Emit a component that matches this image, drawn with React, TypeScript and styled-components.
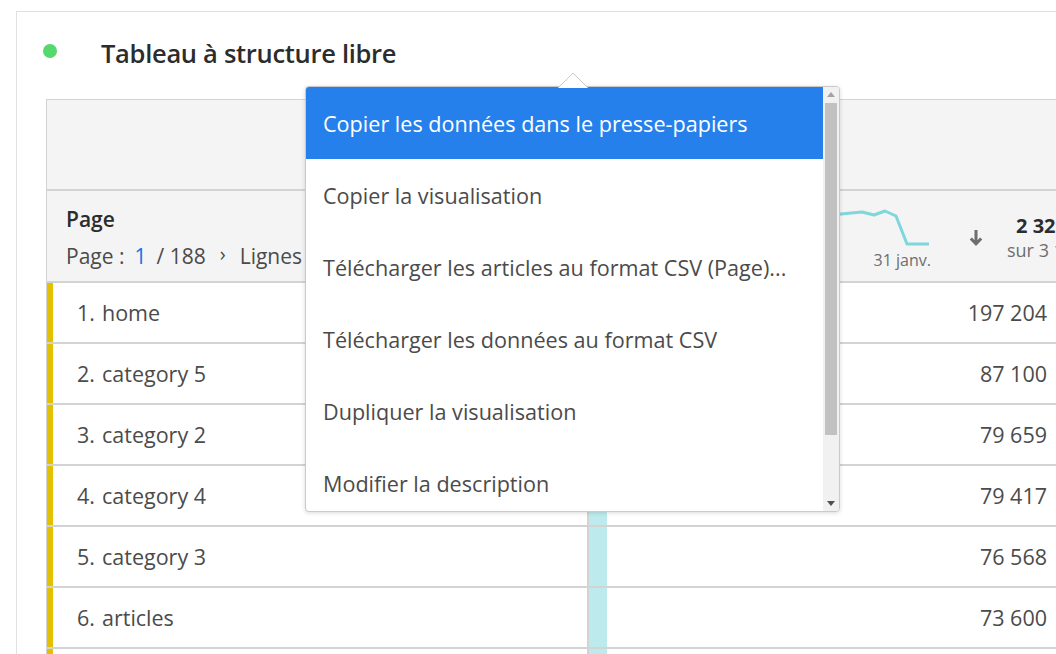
import React from 'react'
import styled, { createGlobalStyle } from 'styled-components'

const GlobalStyle = createGlobalStyle`
  html, body {
    margin: 0;
    padding: 0;
    background: #fff;
    overflow: hidden;
  }
  body {
    font-family: 'Open Sans', 'Liberation Sans', sans-serif;
    color: #4b4b4b;
  }
`

const Page = styled.div`
  position: relative;
  width: 1056px;
  height: 654px;
  overflow: hidden;
  padding: 11px 0 0 16px;
  box-sizing: border-box;
`

const Panel = styled.section`
  width: 1300px;
  height: 100%;
  box-sizing: border-box;
  border-top: 1px solid #e1e1e1;
  border-left: 1px solid #e1e1e1;
`

const TitleBar = styled.header`
  display: flex;
  align-items: center;
  height: 80px;
  padding-left: 26px;
  gap: 44px;
`

const StatusDot = styled.span`
  width: 14px;
  height: 14px;
  border-radius: 50%;
  background: #55d86d;
  margin-top: -2px;
`

const Title = styled.h1`
  margin: 2px 0 0;
  font-size: 25.5px;
  font-weight: 600;
  color: #2c2c2c;
  letter-spacing: -0.3px;
`

const Table = styled.div`
  margin: 7px 0 0 29px;
  border-top: 1px solid #d3d3d3;
  border-left: 1px solid #d3d3d3;
`

const TopHeader = styled.div`
  height: 89px;
  background: #f4f4f4;
  border-bottom: 2px solid #d3d3d3;
`

const ColumnHeader = styled.div`
  display: grid;
  grid-template-columns: 540px 1fr;
  height: 90px;
  background: #f4f4f4;
  border-bottom: 2px solid #d3d3d3;
`

const DimensionCell = styled.div`
  display: flex;
  flex-direction: column;
  justify-content: center;
  gap: 7px;
  padding: 5px 0 0 19px;
`

const DimensionName = styled.div`
  font-size: 21px;
  font-weight: 600;
  color: #2c2c2c;
  line-height: 28px;
`

const Pager = styled.div`
  display: flex;
  align-items: center;
  gap: 9px;
  font-size: 21px;
  line-height: 28px;
  color: #4b4b4b;
  white-space: nowrap;
`

const PageLink = styled.span`
  color: #1473e6;
  padding: 0 1px;
`

const Chevron = styled.span`
  font-size: 20px;
  margin: 0 5px 4px;
`

const MetricHeader = styled.div`
  display: flex;
  align-items: center;
  border-left: 2px solid #d3d3d3;
  padding-left: 20px;
`

const Trend = styled.div`
  display: flex;
  flex-direction: column;
  align-items: flex-end;
  width: 322px;
  padding-top: 6px;
`

const TrendLabel = styled.span`
  font-size: 16px;
  color: #6e6e6e;
  margin-top: 1px;
`

const SortIcon = styled.svg`
  margin: 2px 24px 0 38px;
`

const Totals = styled.div`
  display: flex;
  flex-direction: column;
  align-items: flex-start;
  margin-top: 2px;
  white-space: nowrap;
`

const TotalValue = styled.span`
  font-size: 20px;
  font-weight: 700;
  color: #2c2c2c;
  padding-left: 9px;
  line-height: 25px;
`

const TotalOf = styled.span`
  font-size: 18px;
  color: #6e6e6e;
  line-height: 24px;
`

const Row = styled.div`
  display: grid;
  grid-template-columns: 6px 534px 1fr;
  height: 59px;
  border-bottom: 2px solid #d3d3d3;
`

const RowMarker = styled.span`
  background: #e3c000;
`

const NameCell = styled.div`
  display: flex;
  align-items: center;
  padding-left: 22px;
  font-size: 21.5px;
  color: #4b4b4b;
`

const Rank = styled.span`
  display: inline-block;
  width: 20px;
  margin-right: 7px;
  text-align: right;
`

const ValueCell = styled.div`
  display: flex;
  align-items: stretch;
  border-left: 2px solid #d3d3d3;
`

const ValueBar = styled.span`
  width: 18px;
  background: #bdebed;
`

const Value = styled.span`
  display: flex;
  align-items: center;
  justify-content: flex-end;
  width: 440px;
  font-size: 21.5px;
  color: #4b4b4b;
`

const Percent = styled.span`
  display: flex;
  align-items: center;
  margin-left: 24px;
  font-size: 17px;
  color: #6e6e6e;
`

const Menu = styled.div`
  position: absolute;
  left: 305px;
  top: 86px;
  width: 535px;
  height: 426px;
  box-sizing: border-box;
  display: flex;
  background: #fff;
  border: 1px solid #cacaca;
  border-radius: 4px;
  box-shadow: 0 1px 4px rgba(0, 0, 0, 0.15);
`

const Caret = styled.svg`
  position: absolute;
  top: -15px;
  left: 252px;
`

const MenuList = styled.ul`
  flex: 1;
  margin: 0;
  padding: 0;
  list-style: none;
  overflow: hidden;
  border-radius: 3px 0 0 3px;
`

const MenuItem = styled.li<{ $active?: boolean }>`
  display: flex;
  align-items: center;
  height: 72px;
  padding-left: 17px;
  font-size: 21.6px;
  white-space: nowrap;
  color: ${(p) => (p.$active ? '#fff' : '#4b4b4b')};
  background: ${(p) => (p.$active ? '#2680eb' : 'transparent')};
`

const Scrollbar = styled.div`
  display: flex;
  flex-direction: column;
  width: 16px;
  background: #f1f1f1;
  border-radius: 0 3px 3px 0;
`

const ScrollArrow = styled.div<{ $disabled?: boolean }>`
  display: flex;
  align-items: center;
  justify-content: center;
  height: 15px;
  color: ${(p) => (p.$disabled ? '#a3a3a3' : '#505050')};
`

const ScrollTrack = styled.div`
  flex: 1;
  padding: 1px 2px;
`

const ScrollThumb = styled.div`
  height: 332px;
  background: #c1c1c1;
`

const rows = [
  { name: 'home', value: '197 204', pct: '8,5 %' },
  { name: 'category 5', value: '87 100', pct: '3,7 %' },
  { name: 'category 2', value: '79 659', pct: '3,4 %' },
  { name: 'category 4', value: '79 417', pct: '3,4 %' },
  { name: 'category 3', value: '76 568', pct: '3,3 %' },
  { name: 'articles', value: '73 600', pct: '3,2 %' },
  { name: 'category 1', value: '71 208', pct: '3,1 %' },
]

const menuItems = [
  'Copier les données dans le presse-papiers',
  'Copier la visualisation',
  'Télécharger les articles au format CSV (Page)...',
  'Télécharger les données au format CSV',
  'Dupliquer la visualisation',
  'Modifier la description',
  'Supprimer la visualisation',
]

const Sparkline = () => (
  <svg width="322" height="40" viewBox="0 0 322 40">
    <polyline
      points="0,22 40,18 80,24 120,14 160,20 200,10 232,6 253,4 265,7 276,3 287,8 298,36 320,36"
      fill="none"
      stroke="#7fd7db"
      strokeWidth="3"
      strokeLinejoin="round"
    />
  </svg>
)

export default function App() {
  return (
    <>
      <GlobalStyle />
      <Page>
        <Panel>
          <TitleBar>
            <StatusDot />
            <Title>Tableau à structure libre</Title>
          </TitleBar>
          <Table>
            <TopHeader />
            <ColumnHeader>
              <DimensionCell>
                <DimensionName>Page</DimensionName>
                <Pager>
                  <span>Page :</span>
                  <PageLink>1</PageLink>
                  <span>/ 188</span>
                  <Chevron>›</Chevron>
                  <span>Lignes : 50</span>
                </Pager>
              </DimensionCell>
              <MetricHeader>
                <Trend>
                  <Sparkline />
                  <TrendLabel>31 janv.</TrendLabel>
                </Trend>
                <SortIcon width="14" height="17" viewBox="0 0 14 17">
                  <path d="M7 1v14M1.8 9.5L7 14.8 12.2 9.5" fill="none" stroke="#6e6e6e" strokeWidth="3" />
                </SortIcon>
                <Totals>
                  <TotalValue>2 329 874</TotalValue>
                  <TotalOf>sur 3 154 210</TotalOf>
                </Totals>
              </MetricHeader>
            </ColumnHeader>
            {rows.map((r, i) => (
              <Row key={r.name}>
                <RowMarker />
                <NameCell>
                  <Rank>{i + 1}.</Rank>
                  {r.name}
                </NameCell>
                <ValueCell>
                  <ValueBar />
                  <Value>{r.value}</Value>
                  <Percent>{r.pct}</Percent>
                </ValueCell>
              </Row>
            ))}
          </Table>
        </Panel>

        <Menu>
          <Caret width="30" height="16" viewBox="0 0 30 16">
            <path d="M0 16L15 1l15 15z" fill="#fff" />
            <path d="M0.5 15.5L15 1l14.5 14.5" fill="none" stroke="#cacaca" strokeWidth="1" />
          </Caret>
          <MenuList>
            {menuItems.map((label, i) => (
              <MenuItem key={label} $active={i === 0}>
                {label}
              </MenuItem>
            ))}
          </MenuList>
          <Scrollbar>
            <ScrollArrow $disabled>
              <svg width="8" height="5" viewBox="0 0 8 5">
                <path d="M0 5L4 0l4 5z" fill="currentColor" />
              </svg>
            </ScrollArrow>
            <ScrollTrack>
              <ScrollThumb />
            </ScrollTrack>
            <ScrollArrow>
              <svg width="8" height="5" viewBox="0 0 8 5">
                <path d="M0 0h8L4 5z" fill="currentColor" />
              </svg>
            </ScrollArrow>
          </Scrollbar>
        </Menu>
      </Page>
    </>
  )
}
